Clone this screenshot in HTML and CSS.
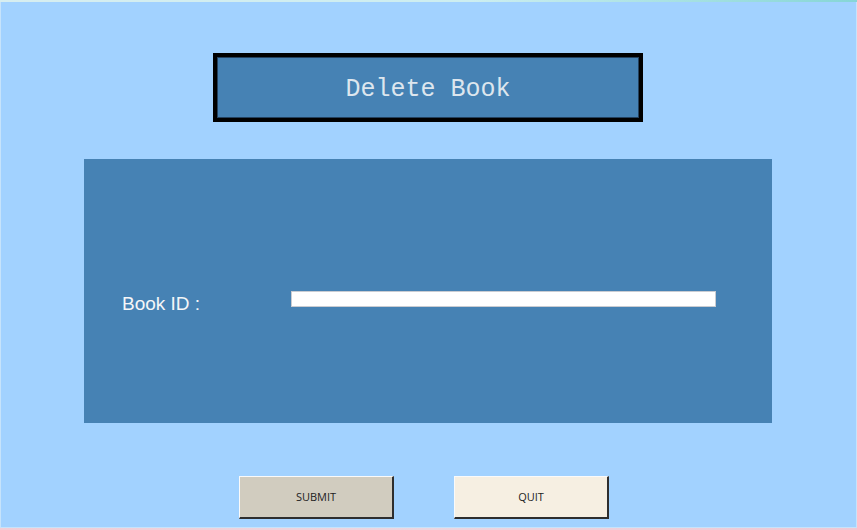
FILE: index.html
```html
<!DOCTYPE html>
<html lang="en">
<head>
<meta charset="utf-8">
<title>Delete Book</title>
<link rel="stylesheet" href="styles.css">
</head>
<body>
<div class="window">
  <div class="topbar"></div>
  <main class="content">
    <header class="title">Delete Book</header>
    <section class="panel">
      <label class="label" for="bookid">Book ID :</label>
      <input class="entry" id="bookid" type="text">
    </section>
    <div class="actions">
      <button class="btn btn-submit" type="button">SUBMIT</button>
      <button class="btn btn-quit" type="button">QUIT</button>
    </div>
  </main>
  <div class="bottombar"></div>
</div>
</body>
</html>
```
FILE: styles.css
```css
* { box-sizing: border-box; }
html, body {
  margin: 0;
  padding: 0;
  width: 857px;
  height: 530px;
  overflow: hidden;
  background: #a2d2ff;
}
.window {
  width: 857px;
  height: 530px;
  display: flex;
  flex-direction: column;
}
.topbar {
  height: 2px;
  background: linear-gradient(90deg, #d7eef0 0%, #cdeef0 55%, #86d6d6 100%);
}
.bottombar {
  height: 2px;
  background: linear-gradient(90deg, #f2cdd6 0%, #ecd6e0 50%, #f0c8d4 100%);
}
.content {
  flex: 1;
  display: flex;
  flex-direction: column;
  background: #a2d2ff;
  border-left: 1px solid #c6e3fb;
  border-right: 1px solid #c6e3fb;
  border-bottom: 1px solid #c6e3fb;
}
.title {
  margin: 51px 0 0 212px;
  width: 430px;
  height: 69px;
  border: 4px solid #000;
  box-shadow: inset 0 0 0 1px #23415e;
  background: #4682b4;
  color: #dde6ee;
  font-family: "Liberation Mono", "DejaVu Sans Mono", monospace;
  font-size: 25px;
  display: flex;
  align-items: center;
  justify-content: center;
  padding-top: 3px;
}
.panel {
  margin: 37px 0 0 83px;
  width: 688px;
  height: 264px;
  background: #4682b4;
  display: flex;
  align-items: flex-start;
  padding: 132px 0 0 38px;
}
.label {
  flex: 0 0 169px;
  color: #f4f6f8;
  font-family: "Liberation Sans", Arial, sans-serif;
  font-size: 19px;
  line-height: 22px;
  margin-top: 2px;
}
.entry {
  width: 425px;
  height: 16px;
  border: 1px solid #c9ccd2;
  background: #fff;
  padding: 0;
  margin: 0;
  outline: none;
}
.actions {
  margin: 53px 0 0 238px;
  display: flex;
  gap: 60px;
}
.btn {
  width: 155px;
  height: 43px;
  padding: 0 0 2px;
  font-family: "Open Sans", "Noto Sans", sans-serif;
  font-size: 11px;
  color: #222;
  border-style: solid;
  border-width: 1px 2px 2px 1px;
  border-color: #fafafa #2e2e2e #2e2e2e #fafafa;
  cursor: pointer;
}
.btn-submit { background: #d1ccbf; }
.btn-quit { background: #f6efe2; }
```
